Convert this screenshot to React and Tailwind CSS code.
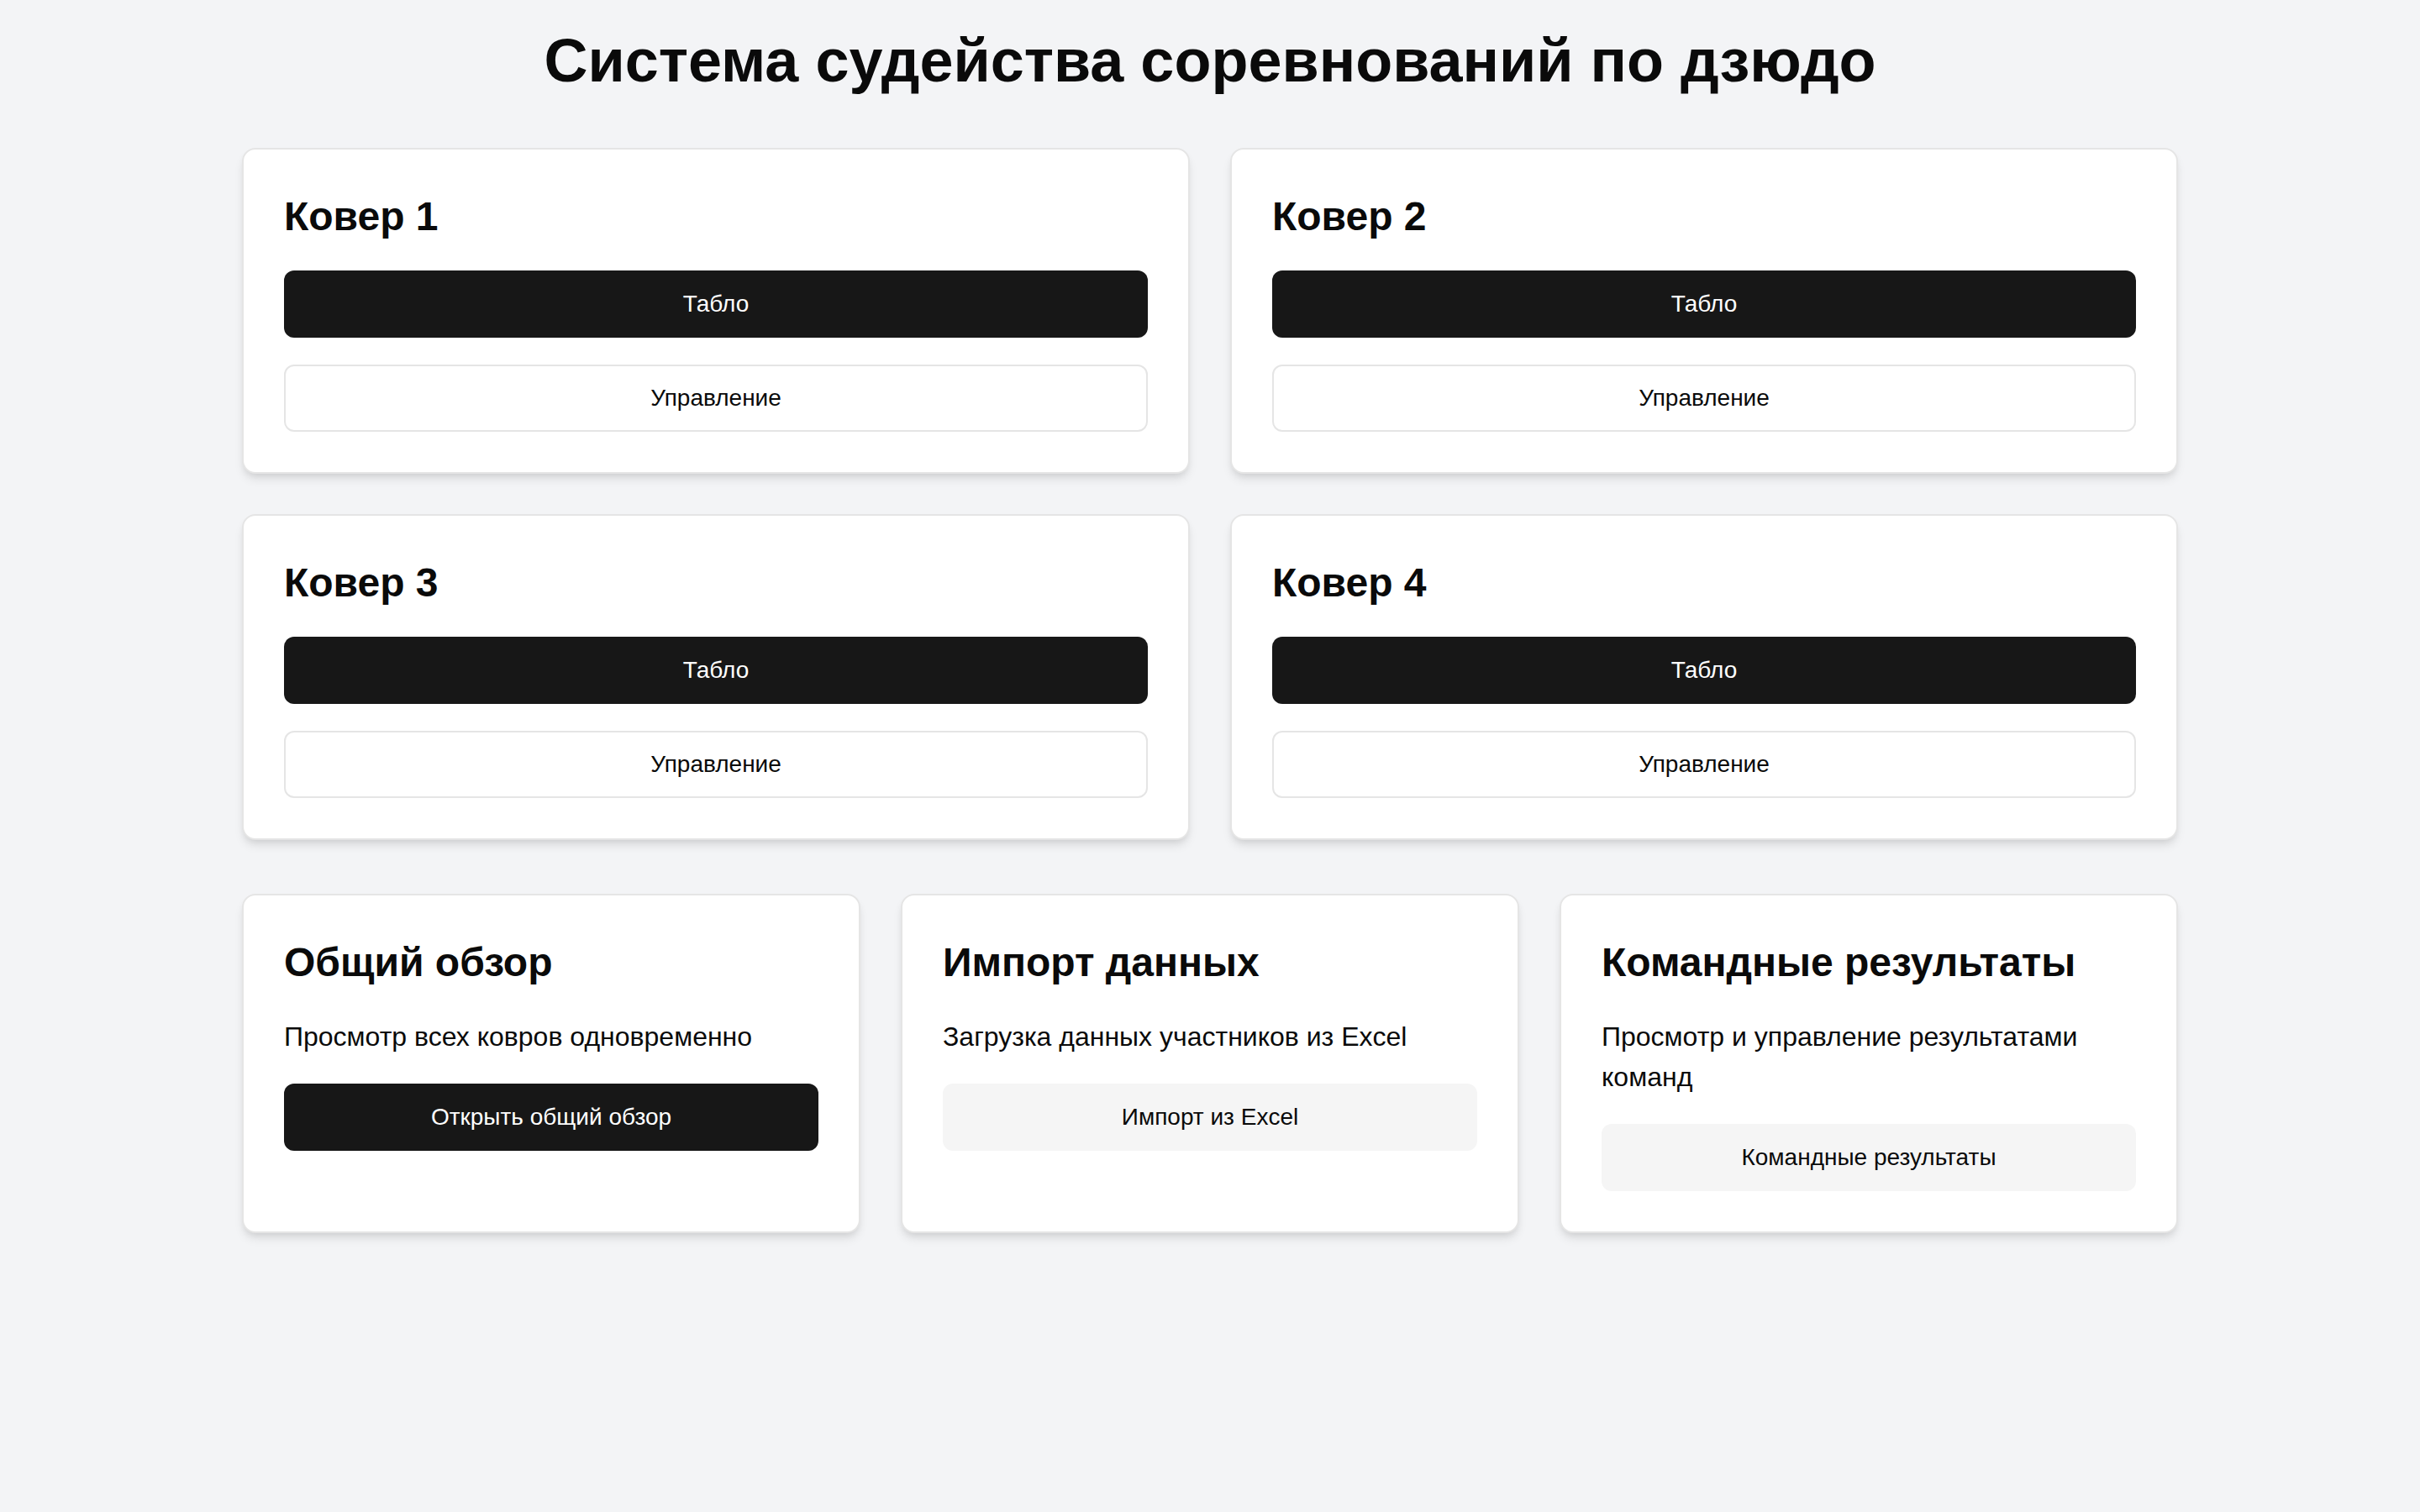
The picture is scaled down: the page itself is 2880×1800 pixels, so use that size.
export default function App() {
  const mats = [1, 2, 3, 4];
  const font = { fontFamily: '"Liberation Sans", Arial, sans-serif' };
  const card =
    "bg-white rounded-2xl border-2 border-[#e5e5e5] shadow-[0_8px_12px_-2px_rgba(0,0,0,0.1),0_4px_8px_-4px_rgba(0,0,0,0.1)] p-12";
  return (
    <div className="min-h-screen bg-[#f3f4f6] p-8 text-[#0a0a0a]" style={font}>
      <div className="max-w-[2304px] mx-auto">
        <h1 className="text-[72px] leading-[80px] font-bold text-center mb-16">Система судейства соревнований по дзюдо</h1>
        <div className="grid grid-cols-2 gap-12 mb-16">
          {mats.map((n) => (
            <div key={n} className={card}>
              <h2 className="text-[48px] leading-[64px] font-bold mb-8">Ковер {n}</h2>
              <div className="flex flex-col gap-8">
                <button className="h-20 rounded-xl bg-[#171717] text-white text-[28px] leading-[40px]">Табло</button>
                <button className="h-20 rounded-xl bg-white border-2 border-[#e5e5e5] text-[28px] leading-[40px] text-[#0a0a0a]">Управление</button>
              </div>
            </div>
          ))}
        </div>
        <div className="grid grid-cols-3 gap-12">
          <div className={card}>
            <h2 className="text-[48px] leading-[64px] font-bold mb-8">Общий обзор</h2>
            <p className="text-[32px] leading-[48px] mb-8">Просмотр всех ковров одновременно</p>
            <button className="w-full h-20 rounded-xl bg-[#171717] text-white text-[28px] leading-[40px]">Открыть общий обзор</button>
          </div>
          <div className={card}>
            <h2 className="text-[48px] leading-[64px] font-bold mb-8">Импорт данных</h2>
            <p className="text-[32px] leading-[48px] mb-8">Загрузка данных участников из Excel</p>
            <button className="w-full h-20 rounded-xl bg-[#f5f5f5] text-[28px] leading-[40px] text-[#0a0a0a]">Импорт из Excel</button>
          </div>
          <div className={card}>
            <h2 className="text-[48px] leading-[64px] font-bold mb-8">Командные результаты</h2>
            <p className="text-[32px] leading-[48px] mb-8">Просмотр и управление результатами команд</p>
            <button className="w-full h-20 rounded-xl bg-[#f5f5f5] text-[28px] leading-[40px] text-[#0a0a0a]">Командные результаты</button>
          </div>
        </div>
      </div>
    </div>
  );
}
